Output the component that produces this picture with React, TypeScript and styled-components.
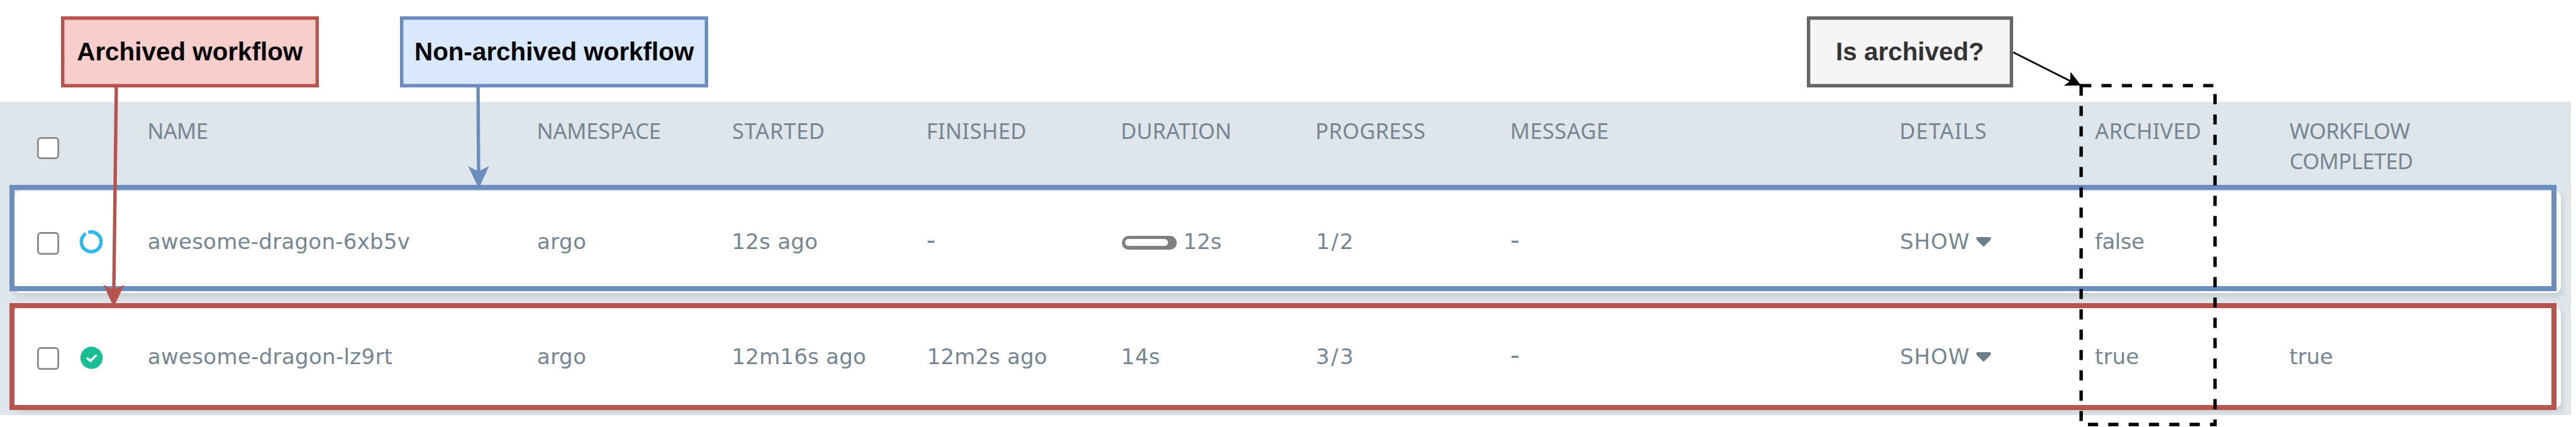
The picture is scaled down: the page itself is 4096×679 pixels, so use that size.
import React from 'react';
import styled, { createGlobalStyle } from 'styled-components';

/* Design units are those of a 6080-wide canvas; r() converts them to page pixels. */
const K = 4096 / 6080;
const r = (n: number) => `${+(n * K).toFixed(3)}px`;

const Global = createGlobalStyle`
  html, body { margin: 0; background: #fff; overflow: hidden; }
  *, *::before, *::after { box-sizing: border-box; }
`;

const Stage = styled.main`
  position: relative;
  width: 4096px;
  height: 679px;
  overflow: hidden;
  background: #fff;
  color: #758692;
`;

const Callouts = styled.header`
  display: flex;
  height: ${r(240)};
  padding-top: ${r(38)};
`;

const Callout = styled.div<{ $w: number; $gap: number; $line: string; $fill: string; $ink: string }>`
  display: flex;
  align-items: center;
  justify-content: center;
  flex: none;
  width: ${p => r(p.$w)};
  height: ${r(168)};
  margin-left: ${p => r(p.$gap)};
  padding-top: ${r(2)};
  background: ${p => p.$fill};
  box-shadow: inset 0 0 0 ${r(8)} ${p => p.$line};
  color: ${p => p.$ink};
  font: bold 40.4px "Liberation Sans", Arial, sans-serif;
  white-space: nowrap;
`;

const Panel = styled.section`
  width: ${r(6068)};
  height: ${r(740)};
  overflow: hidden;
  background: #dee5eb;
`;

const columns = (lead: number) =>
  `${r(lead)} ${r(919)} repeat(4, ${r(459.5)}) ${r(459.5)} ${r(919)} repeat(2, ${r(459.5)}) 1fr`;

const HeadRow = styled.div`
  display: grid;
  grid-template-columns: ${columns(348.5)};
  height: ${r(212)};
  padding-top: ${r(32.7)};
  font: 34.5px/${r(72)} "Noto Sans", sans-serif;
`;

const HeadCell = styled.div<{ $ls: number; $nudge: number }>`
  margin-left: ${p => p.$nudge}px;
  letter-spacing: ${p => p.$ls}px;
`;

const Card = styled.div`
  position: relative;
  display: grid;
  grid-template-columns: ${columns(316.5)};
  align-items: center;
  width: ${r(6012)};
  height: ${r(240)};
  margin: 0 0 ${r(32)} ${r(32)};
  border-radius: ${r(16)};
  background: #fff;
  box-shadow: ${r(4)} ${r(8)} ${r(13)} #c7cfd2;
  font: 34px/${r(72)} "DejaVu Sans", Verdana, sans-serif;
`;

const Cell = styled.div<{ $ls?: number; $nudge?: number }>`
  display: flex;
  align-items: center;
  margin-left: ${p => p.$nudge ?? 0}px;
  padding-bottom: ${r(3)};
  letter-spacing: ${p => p.$ls ?? 0}px;
  white-space: nowrap;
`;

const DashMark = styled.span`
  font-size: 41px;
  line-height: 0;
`;

const Lead = styled.div<{ $left: number; $top: number }>`
  display: flex;
  align-items: center;
  padding: ${p => r(p.$top)} 0 0 ${p => r(p.$left)};
  height: ${r(56)};
`;

const Checkbox = styled.span`
  flex: none;
  width: ${r(52)};
  height: ${r(53)};
  border-radius: ${r(9)};
  background: #fff;
  box-shadow: inset 0 0 0 ${r(4)} #868686;
`;

const StatusIcon = styled.svg`
  flex: none;
  width: ${r(56)};
  height: ${r(56)};
  margin: -${r(4)} 0 0 ${r(46.5)};
`;

const Bar = styled.span`
  display: flex;
  flex: none;
  width: ${r(129)};
  height: ${r(33)};
  margin: ${r(4)} ${r(16)} 0 ${r(2)};
  padding: ${r(8)};
  border-radius: ${r(16)};
  background: #808080;
`;

const BarFill = styled.span`
  width: ${r(101)};
  border-radius: ${r(8)};
  background: #fff;
`;

const Caret = styled.svg`
  width: ${r(36)};
  height: ${r(23)};
  margin-left: ${r(15)};
`;

const Frame = styled.div<{ $color: string; $top: number; $bottom: number }>`
  position: absolute;
  left: ${r(-10)};
  right: ${r(10)};
  top: ${p => r(p.$top)};
  bottom: ${p => r(p.$bottom)};
  box-shadow: inset 0 0 0 ${r(12)} ${p => p.$color};
`;

const Overlay = styled.svg`
  position: absolute;
  inset: 0;
  width: 4096px;
  height: 679px;
  pointer-events: none;
`;

const BLUE = '#6c8ebf';
const RED = '#b85450';

const heads: [string, number, number][] = [
  ['NAME', -0.7, -0.6],
  ['NAMESPACE', -0.2, -0.5],
  ['STARTED', 0.77, 0.5],
  ['FINISHED', 0.36, 0],
  ['DURATION', 0.11, -0.6],
  ['PROGRESS', 0.29, -0.5],
  ['MESSAGE', 0.4, -0.4],
  ['DETAILS', 1.09, -0.5],
  ['ARCHIVED', 0.15, 1],
];

const Running = () => (
  <StatusIcon viewBox="0 0 56 56">
    <path d="M21.4 5.5 A23.3 23.3 0 1 1 15.6 8.2" transform="translate(0 -.2)" fill="none" stroke="#2cb7ef" strokeWidth="8" />
  </StatusIcon>
);

const Succeeded = () => (
  <StatusIcon viewBox="0 0 56 56">
    <circle cx="29" cy="28.2" r="26.3" fill="#18be94" />
    <path d="M17.8 28.5 L26.5 35.5 L41 21.5" fill="none" stroke="#fff" strokeWidth="5.4" />
  </StatusIcon>
);

const Show = () => (
  <Cell $ls={0.96} $nudge={0.2}>
    SHOW
    <Caret viewBox="0 0 36 23"><path d="M0.5 3 Q0.5 0 4 0 H32 Q35.5 0 35.5 3 Q35 6 33 8 L18 23 L3 8 Q1 6 .5 3Z" fill="#6d7f8b" /></Caret>
  </Cell>
);

const Dash = () => <Cell><span><DashMark>-</DashMark></span></Cell>;

export default function App() {
  return (
    <Stage>
      <Global />
      <Callouts>
        <Callout $w={608} $gap={144} $line={RED} $fill="#f8cecc" $ink="#000">Archived workflow</Callout>
        <Callout $w={728} $gap={192} $line={BLUE} $fill="#dae8fc" $ink="#000">Non-archived workflow</Callout>
        <Callout $w={488} $gap={2592} $line="#666" $fill="#f5f5f5" $ink="#333">Is archived?</Callout>
      </Callouts>
      <Panel>
        <HeadRow>
          <Lead $left={88} $top={77}><Checkbox /></Lead>
          {heads.map(([label, ls, nudge]) => (
            <HeadCell key={label} $ls={ls} $nudge={nudge}>{label}</HeadCell>
          ))}
          <HeadCell $ls={-0.55} $nudge={0.8}>WORKFLOW<br />COMPLETED</HeadCell>
        </HeadRow>
        <Card>
          <Lead $left={56} $top={4}><Checkbox /><Running /></Lead>
          <Cell $ls={0.27} $nudge={0}>awesome-dragon-6xb5v</Cell>
          <Cell $ls={0.5} $nudge={0}>argo</Cell>
          <Cell $ls={0.31}>12s ago</Cell>
          <Dash />
          <Cell><Bar><BarFill /></Bar>12s</Cell>
          <Cell $ls={2.2} $nudge={0.8}>1/2</Cell>
          <Dash />
          <Show />
          <Cell $ls={-0.5} $nudge={0.8}>false</Cell>
          <Cell />
          <Frame $color={BLUE} $top={-16} $bottom={4} />
        </Card>
        <Card>
          <Lead $left={56} $top={4}><Checkbox /><Succeeded /></Lead>
          <Cell $ls={0.32} $nudge={0}>awesome-dragon-lz9rt</Cell>
          <Cell $ls={0.5} $nudge={0}>argo</Cell>
          <Cell $ls={0.25}>12m16s ago</Cell>
          <Cell $ls={0.16} $nudge={1}>12m2s ago</Cell>
          <Cell $ls={0.5} $nudge={0}>14s</Cell>
          <Cell $ls={2.6} $nudge={0.2}>3/3</Cell>
          <Dash />
          <Show />
          <Cell $ls={0.1} $nudge={0.8}>true</Cell>
          <Cell $ls={-0.1} $nudge={0.4}>true</Cell>
          <Frame $color={RED} $top={-8} $bottom={-4} />
        </Card>
      </Panel>
      <Overlay viewBox="0 0 6080 1008" preserveAspectRatio="none">
        <path d="M274.5 206 L268.6 690" stroke={RED} strokeWidth="8" />
        <path d="M268.2 725 L244.2 672 L268.5 684.5 L293.5 672.4 Z" fill={RED} />
        <path d="M1128.3 206 L1129.6 410" stroke={BLUE} strokeWidth="8" />
        <path d="M1130 445 L1104.8 392.3 L1129.6 404.5 L1154.2 392 Z" fill={BLUE} />
        <path d="M4752 123.5 L4892 194" stroke="#000" strokeWidth="4" />
        <path d="M4912 202 L4871 202.3 L4886 191.5 L4887 169.5 Z" fill="#000" />
        <path d="M4912 202 H5228 V1002 H4912 Z" fill="none" stroke="#000" strokeWidth="8" strokeDasharray="24 24" />
      </Overlay>
    </Stage>
  );
}
